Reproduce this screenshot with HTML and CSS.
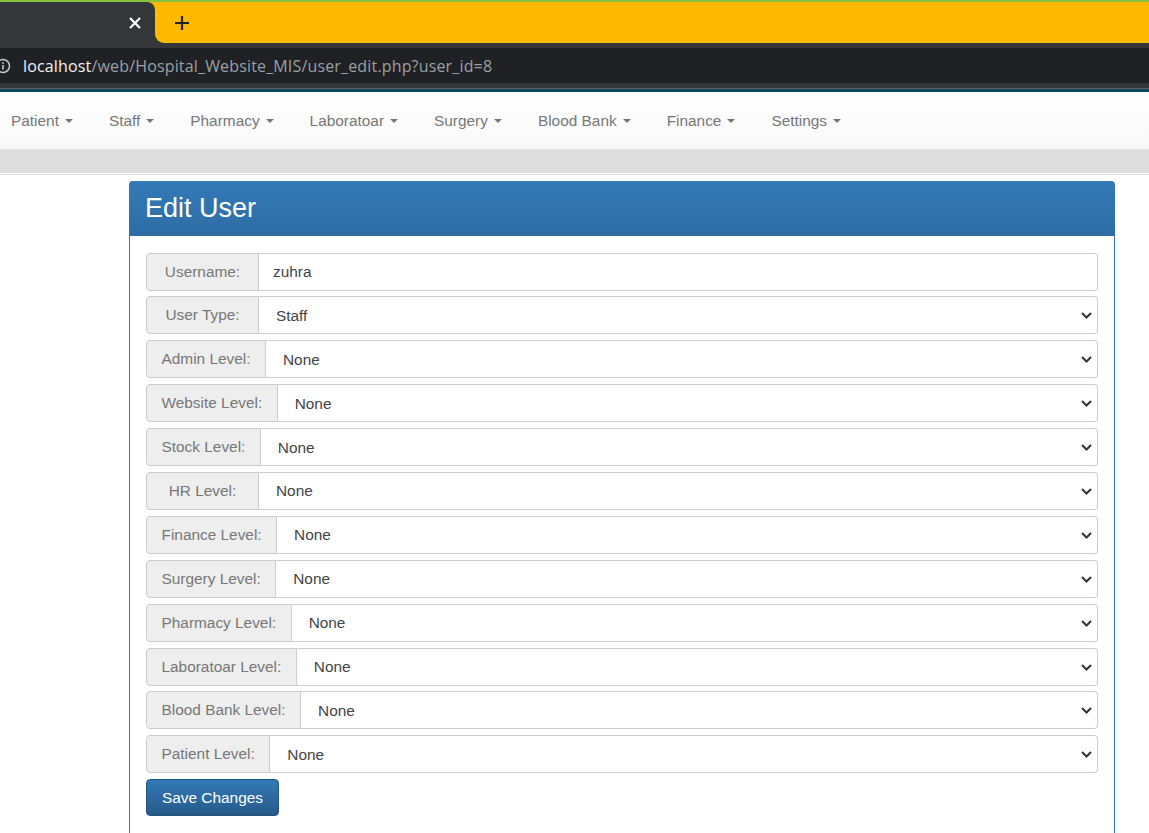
FILE: index.html
```html
<!DOCTYPE html>
<html lang="en">
<head>
<meta charset="utf-8">
<title>Edit User</title>
<link rel="stylesheet" href="styles.css">
</head>
<body>
<div class="chrome">
  <div class="tabstrip">
    <div class="tab">
      <svg class="tab-close" width="12" height="12" viewBox="0 0 12 12"><path d="M1 1 L11 11 M11 1 L1 11" stroke="#fff" stroke-width="2.2" fill="none"/></svg>
    </div>
    <div class="newtab">
      <svg class="plus" width="14" height="14" viewBox="0 0 14 14"><path d="M7 0 V14 M0 7 H14" stroke="#202124" stroke-width="2.2" fill="none"/></svg>
    </div>
  </div>
  <div class="toolbar">
    <div class="omnibox">
      <svg class="info" width="16" height="16" viewBox="0 0 16 16"><circle cx="8" cy="8" r="6.5" stroke="#c8c8c8" stroke-width="1.5" fill="none"/><rect x="7.2" y="7" width="1.6" height="4.5" fill="#c8c8c8"/><rect x="7.2" y="4.3" width="1.6" height="1.6" fill="#c8c8c8"/></svg>
      <span class="host">localhost</span><span class="path">/web/Hospital_Website_MIS/user_edit.php?user_id=8</span>
    </div>
  </div>
  <div class="toolbar-edge"></div>
  <div class="teal"></div>
</div>

<nav class="navbar">
  <ul class="nav">
    <li><a>Patient <span class="caret"></span></a></li>
    <li><a>Staff <span class="caret"></span></a></li>
    <li><a>Pharmacy <span class="caret"></span></a></li>
    <li><a>Laboratoar <span class="caret"></span></a></li>
    <li><a>Surgery <span class="caret"></span></a></li>
    <li><a>Blood Bank <span class="caret"></span></a></li>
    <li><a>Finance <span class="caret"></span></a></li>
    <li><a>Settings <span class="caret"></span></a></li>
  </ul>
</nav>
<div class="subbar"></div>
<div class="sep"></div>

<main class="page">
  <section class="panel">
    <div class="panel-heading">Edit User</div>
    <form class="panel-body">
      <div class="input-group">
        <span class="addon">Username:</span>
        <input class="control" type="text" value="zuhra">
      </div>
      <div class="input-group">
        <span class="addon">User Type:</span>
        <div class="select-wrap"><select class="control select"><option>Staff</option></select><svg class="chev" width="11" height="7" viewBox="0 0 11 7"><path d="M1 1 L5.5 5.5 L10 1" stroke="#333" stroke-width="2" fill="none"/></svg></div>
      </div>
      <div class="input-group">
        <span class="addon">Admin Level:</span>
        <div class="select-wrap"><select class="control select"><option>None</option></select><svg class="chev" width="11" height="7" viewBox="0 0 11 7"><path d="M1 1 L5.5 5.5 L10 1" stroke="#333" stroke-width="2" fill="none"/></svg></div>
      </div>
      <div class="input-group">
        <span class="addon">Website Level:</span>
        <div class="select-wrap"><select class="control select"><option>None</option></select><svg class="chev" width="11" height="7" viewBox="0 0 11 7"><path d="M1 1 L5.5 5.5 L10 1" stroke="#333" stroke-width="2" fill="none"/></svg></div>
      </div>
      <div class="input-group">
        <span class="addon">Stock Level:</span>
        <div class="select-wrap"><select class="control select"><option>None</option></select><svg class="chev" width="11" height="7" viewBox="0 0 11 7"><path d="M1 1 L5.5 5.5 L10 1" stroke="#333" stroke-width="2" fill="none"/></svg></div>
      </div>
      <div class="input-group">
        <span class="addon">HR Level:</span>
        <div class="select-wrap"><select class="control select"><option>None</option></select><svg class="chev" width="11" height="7" viewBox="0 0 11 7"><path d="M1 1 L5.5 5.5 L10 1" stroke="#333" stroke-width="2" fill="none"/></svg></div>
      </div>
      <div class="input-group">
        <span class="addon">Finance Level:</span>
        <div class="select-wrap"><select class="control select"><option>None</option></select><svg class="chev" width="11" height="7" viewBox="0 0 11 7"><path d="M1 1 L5.5 5.5 L10 1" stroke="#333" stroke-width="2" fill="none"/></svg></div>
      </div>
      <div class="input-group">
        <span class="addon">Surgery Level:</span>
        <div class="select-wrap"><select class="control select"><option>None</option></select><svg class="chev" width="11" height="7" viewBox="0 0 11 7"><path d="M1 1 L5.5 5.5 L10 1" stroke="#333" stroke-width="2" fill="none"/></svg></div>
      </div>
      <div class="input-group">
        <span class="addon">Pharmacy Level:</span>
        <div class="select-wrap"><select class="control select"><option>None</option></select><svg class="chev" width="11" height="7" viewBox="0 0 11 7"><path d="M1 1 L5.5 5.5 L10 1" stroke="#333" stroke-width="2" fill="none"/></svg></div>
      </div>
      <div class="input-group">
        <span class="addon">Laboratoar Level:</span>
        <div class="select-wrap"><select class="control select"><option>None</option></select><svg class="chev" width="11" height="7" viewBox="0 0 11 7"><path d="M1 1 L5.5 5.5 L10 1" stroke="#333" stroke-width="2" fill="none"/></svg></div>
      </div>
      <div class="input-group">
        <span class="addon">Blood Bank Level:</span>
        <div class="select-wrap"><select class="control select"><option>None</option></select><svg class="chev" width="11" height="7" viewBox="0 0 11 7"><path d="M1 1 L5.5 5.5 L10 1" stroke="#333" stroke-width="2" fill="none"/></svg></div>
      </div>
      <div class="input-group">
        <span class="addon">Patient Level:</span>
        <div class="select-wrap"><select class="control select"><option>None</option></select><svg class="chev" width="11" height="7" viewBox="0 0 11 7"><path d="M1 1 L5.5 5.5 L10 1" stroke="#333" stroke-width="2" fill="none"/></svg></div>
      </div>
      <button type="button" class="btn-primary">Save Changes</button>
    </form>
  </section>
</main>
</body>
</html>
```

FILE: styles.css
```css
* { box-sizing: border-box; }
html, body { margin: 0; padding: 0; background: #fff; overflow: hidden; }
body { font-family: "Liberation Sans", Arial, sans-serif; font-size: 15.4px; color: #333; }

/* Browser chrome */
.chrome { display: flex; flex-direction: column; }
.tabstrip {
  display: flex;
  height: 43px;
  border-top: 2px solid #86c13f;
  background: linear-gradient(to bottom, #ffb900 0, #ffb900 50%, #35363a 50%, #35363a 100%);
}
.tab {
  width: 155px;
  background: #35363a;
  border-top-right-radius: 8px;
  display: flex;
  align-items: center;
  justify-content: flex-end;
  padding-right: 14px;
}
.newtab {
  flex: 1;
  background: #ffb900;
  border-bottom-left-radius: 9px;
  display: flex;
  align-items: center;
  padding-left: 20px;
}
.toolbar { background: #35363a; padding: 5px 0; height: 45px; }
.omnibox {
  height: 35px;
  background: #202124;
  display: flex;
  align-items: center;
  font-family: "Open Sans", "Noto Sans", sans-serif;
  font-size: 16px;
  letter-spacing: 0.16px;
  white-space: nowrap;
}
.info { margin-left: -5px; margin-right: 12px; }
.host { color: #f1f3f4; }
.path { color: #9aa0a6; }
.toolbar-edge { height: 1px; background: #5f6064; }
.teal { height: 3px; background: #0b4a5e; }

/* Navbar */
.navbar {
  height: 58px;
  background: linear-gradient(to bottom, #ffffff 0, #f8f8f8 100%);
  border-bottom: 1px solid #e3e3e3;
  display: flex;
  align-items: center;
}
.nav { list-style: none; margin: 0 0 0 -7px; padding: 0; display: flex; }
.nav a {
  display: flex;
  align-items: center;
  padding: 0 18px;
  color: #777;
  font-size: 15.4px;
}
.caret {
  display: inline-block;
  width: 0; height: 0;
  margin-left: 6px;
  border-top: 4.5px solid #777;
  border-left: 4.5px solid transparent;
  border-right: 4.5px solid transparent;
}
.subbar { height: 23px; background: #dedede; }
.sep { height: 1px; margin-top: 1px; background: #ddd; }

/* Page */
.page { padding: 6px 34px 0 129px; }
.panel {
  border: 1px solid #337ab7;
  border-radius: 5px 5px 0 0;
  height: 700px;
}
.panel-heading {
  height: 55px;
  background: linear-gradient(to bottom, #337ab7 0, #2e6da4 100%);
  color: #fff;
  font-size: 27px;
  padding-left: 16px;
  display: flex;
  align-items: center;
  border-radius: 4px 4px 0 0;
  margin: -1px -1px 0 -1px;
  padding-bottom: 1px;
}
.panel-body {
  padding: 16.5px 16.5px 16px 16px;
  display: flex;
  flex-direction: column;
  gap: 5.9px;
  margin: 0;
}
.input-group { display: flex; height: 38px; }
.addon {
  min-width: 113px;
  padding: 0 14.5px;
  background: #eee;
  border: 1px solid #ccc;
  border-radius: 4px 0 0 4px;
  color: #777;
  display: flex;
  align-items: center;
  justify-content: center;
  white-space: nowrap;
  font-size: 15.4px;
}
.control {
  flex: 1;
  min-width: 0;
  height: 38px;
  border: 1px solid #ccc;
  border-left: 0;
  border-radius: 0 4px 4px 0;
  background: #fff;
  font-family: "Liberation Sans", Arial, sans-serif;
  font-size: 15.4px;
  color: #444;
  padding: 0 14px;
  margin: 0;
  outline: none;
}
.select-wrap { flex: 1; display: flex; position: relative; }
.select {
  -webkit-appearance: none;
  appearance: none;
  width: 100%;
  padding-left: 17px;
}
.chev { position: absolute; right: 6px; top: 16px; pointer-events: none; }
.btn-primary {
  align-self: flex-start;
  height: 37px;
  margin-top: 0.2px;
  padding: 0 15px;
  font-family: "Liberation Sans", Arial, sans-serif;
  font-size: 15.4px;
  color: #fff;
  background: linear-gradient(to bottom, #337ab7 0, #265a88 100%);
  border: 1px solid #245580;
  border-radius: 4px;
}
```
